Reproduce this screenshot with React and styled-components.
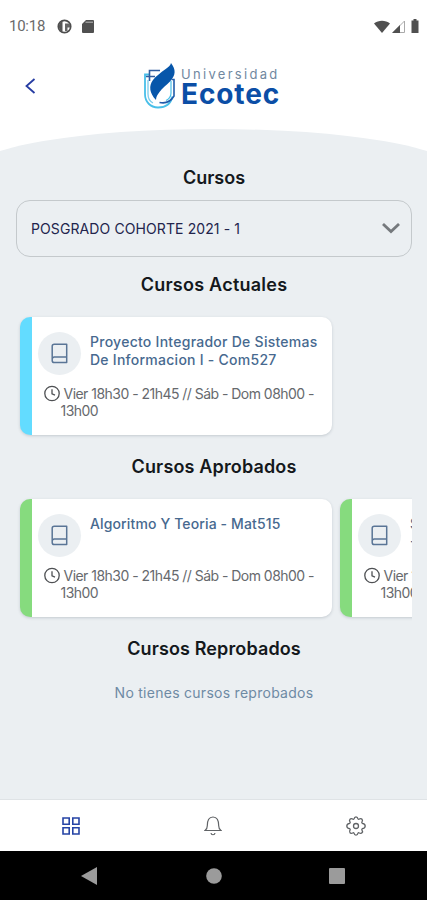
import React from 'react';
import styled, { createGlobalStyle } from 'styled-components';

const GlobalStyle = createGlobalStyle`
  * {
    box-sizing: border-box;
  }

  body {
    margin: 0;
    background: #fff;
    font-family: Inter, 'Open Sans', sans-serif;
  }

  svg {
    display: block;
    flex: none;
  }
`;

const Screen = styled.div`
  display: flex;
  flex-direction: column;
  height: 900px;
  overflow: hidden;
`;

const StatusBar = styled.div`
  display: flex;
  align-items: center;
  flex: none;
  height: 52px;
  padding: 0 4px 0 9px;
  font: 400 15px Roboto, sans-serif;
  letter-spacing: -0.25px;
  color: #6a6a6a;
`;

const StatusGroup = styled.div`
  display: flex;
  align-items: center;
  gap: ${({ $gap }) => $gap}px;
  margin-left: ${({ $left }) => $left};
`;

const Header = styled.header`
  display: grid;
  grid-template-columns: 62px 1fr 62px;
  flex: none;
  height: 77px;
`;

const BackButton = styled.button`
  display: flex;
  height: 67px;
  padding: 0 0 0 24px;
  align-items: center;
  border: 0;
  background: none;
`;

const Brand = styled.div`
  display: flex;
  height: 68px;
  gap: 4px;
  padding: 10px 0 0 81px;
`;

const BrandName = styled.div`
  display: flex;
  flex-direction: column;
  white-space: nowrap;
`;

const BrandTop = styled.span`
  margin-top: 5px;
  font: 400 13px/15px Inter, sans-serif;
  letter-spacing: 2.3px;
  color: #71889f;
`;

const BrandBottom = styled.span`
  font: 700 28px/25px Inter, sans-serif;
  letter-spacing: 0.9px;
  color: #0b4ea6;
`;

const Body = styled.main`
  flex: 1;
  min-height: 0;
  margin: 0 -27px;
  padding: 37px 42px 0 43px;
  border-radius: 240px 240px 0 0 / 41px 41px 0 0;
  background: #ebeff2;
`;

const SectionTitle = styled.h2`
  height: 24px;
  margin: 0;
  font-size: 18px;
  font-weight: 600;
  line-height: 24px;
  letter-spacing: ${({ $spacing }) => $spacing || 0}px;
  text-align: center;
  color: #14181c;
`;

const Select = styled.div`
  display: flex;
  align-items: center;
  justify-content: space-between;
  height: 57px;
  margin: 10px 0 16px;
  padding: 0 11px 0 14px;
  border: 1.5px solid #c4c9cc;
  border-radius: 14px;
  font-size: 14px;
  letter-spacing: 0.1px;
  color: #22244c;
`;

const CardRow = styled.div`
  display: flex;
  gap: 8px;
  height: 142px;
  margin-bottom: 16px;
  padding: 20px 0 4px 4px;
  overflow: hidden;
`;

const CardBox = styled.article`
  flex: none;
  width: 312px;
  height: 118px;
  padding: 15px 0 0 6px;
  border-left: 12px solid ${({ $accent }) => $accent};
  border-radius: 10px;
  background: #fff;
  box-shadow: 0 1px 3px rgba(60, 75, 90, 0.22);
`;

const CardTop = styled.div`
  display: flex;
  gap: 9px;
  height: 53px;
`;

const IconCircle = styled.div`
  display: flex;
  flex: none;
  align-items: center;
  justify-content: center;
  width: 43px;
  height: 43px;
  border-radius: 50%;
  background: #ebeff2;
`;

const CourseName = styled.h3`
  margin: 1px 0 0;
  font-size: 14px;
  font-weight: 500;
  line-height: 18px;
  letter-spacing: ${({ $spacing }) => $spacing || 0}px;
  white-space: pre;
  color: #47698f;
`;

const Schedule = styled.div`
  display: grid;
  grid-template-columns: 16px 1fr;
  column-gap: 3.5px;
  padding-left: 6px;
  font-size: 14px;
  line-height: 17px;
  letter-spacing: -0.53px;
  white-space: nowrap;
  color: #66696d;
`;

const ScheduleEnd = styled.span`
  grid-column: 2;
  margin-left: -3px;
`;

const EmptyText = styled.p`
  margin: 20px 0 0;
  font-size: 14px;
  line-height: 24px;
  letter-spacing: 0.27px;
  text-align: center;
  color: #6e8aa4;
`;

const TabBar = styled.nav`
  display: grid;
  grid-template-columns: repeat(3, 1fr);
  flex: none;
  align-items: center;
  justify-items: center;
  height: 52px;
  border-top: 1px solid #dfe3e6;
  background: #fff;
`;

const SystemBar = styled.div`
  display: flex;
  flex: none;
  align-items: center;
  justify-content: space-between;
  height: 49px;
  padding: 0 82px 0 81px;
  background: #000;
`;

const BrandMark = () => (
  <svg width="34" height="48" viewBox="0 0 34 48" fill="none">
    <path d="M7 12.500H2V32c0 8 5.500 13.500 13 13.500 8 0 13-4.500 14.500-11" stroke="#48bfe9" strokeWidth="1.800" />
    <path d="M17 8.500H6.500V19M3 14.500h9" stroke="#315d9f" strokeWidth="1.600" />
    <path d="M5 18v14c0 4 2 7.500 5 9" stroke="#7cccec" strokeWidth="1.300" />
    <path d="M28.500 17.500h2.500V34c-3 5-8 8-14.500 6.500" stroke="#215bab" strokeWidth="1.600" />
    <path d="M28 19v12c0 3-2 6-5 7.500" stroke="#48bfe9" strokeWidth="1.200" />
    <path d="M28 1c5 6.500 5 12-1 18.500-3 3-8 7-10.500 10.500-2 2.500-3.500 5-3.500 8C6.500 31 5.500 24 10 18c3-4 8-7.500 12-10.500C25.500 5 27.500 3.500 28 1Z" fill="#0756aa" />
  </svg>
);

const BookIcon = () => (
  <svg width="17" height="21" viewBox="0 0 17 21" fill="none" stroke="#5a7596" strokeWidth="1.500" strokeLinejoin="round">
    <path d="M3.300 1.200h12.400v18.400H3.300c-1.300 0-2.100-.8-2.100-2.100V3.300c0-1.300.8-2.100 2.100-2.100ZM1.200 16.300c0-1.300.8-2.200 2.100-2.200h12.400" />
  </svg>
);

const ClockIcon = () => (
  <svg width="16" height="17" viewBox="0 0 16 17" fill="none" stroke="#4e5053" strokeWidth="1.300">
    <circle cx="8" cy="8.500" r="7.200" />
    <path d="M8 4.300v4.500l3 1.300" />
  </svg>
);

const GearIcon = () => (
  <svg width="20" height="20" viewBox="0 0 20 20" fill="none" stroke="#606366" strokeWidth="1.300" strokeLinejoin="round">
    <path d="M8 3C8.300 1.400 8.800.8 10 .8s1.700.6 2 2.200l.8.300c1.400-.9 2.500-.9 3.200-.1s.7 1.800-.2 3.200l.4.900c1.700.2 3 .9 3 2.700s-1.300 2.500-3 2.700l-.4.900c.9 1.400.9 2.500.2 3.200s-1.800.7-3.200-.1L12 17c-.3 1.600-.8 2.200-2 2.200S8.300 18.600 8 17l-.8-.3c-1.400.8-2.500.9-3.200.1s-.7-1.800.2-3.200l-.4-.9C2.100 12.500.8 11.800.8 10s1.300-2.500 3-2.700l.4-.9c-.9-1.400-.9-2.500-.2-3.200s1.800-.8 3.200.1Z" />
    <circle cx="10" cy="10" r="2.500" />
  </svg>
);

function CourseCard({ accent, name, spacing }) {
  return (
    <CardBox $accent={accent}>
      <CardTop>
        <IconCircle>
          <BookIcon />
        </IconCircle>
        <CourseName $spacing={spacing}>{name}</CourseName>
      </CardTop>
      <Schedule>
        <ClockIcon />
        <span>Vier 18h30 - 21h45 // Sáb - Dom 08h00 -</span>
        <ScheduleEnd>13h00</ScheduleEnd>
      </Schedule>
    </CardBox>
  );
}

export default function App() {
  return (
    <Screen>
      <GlobalStyle />
      <StatusBar>
        <span>10:18</span>
        <StatusGroup $gap={10} $left="12px">
          <svg width="15" height="15" viewBox="0 0 15 15">
            <circle cx="7.500" cy="7.500" r="6.200" fill="#fff" stroke="#4d4d4d" strokeWidth="1.700" />
            <path d="M5.500 2v11A6 6 0 0 1 5.500 2Z" fill="#555" />
            <path d="M8 4.500h5v4h-2.500V12H8Z" fill="#666" />
          </svg>
          <svg width="12" height="14" viewBox="0 0 12 14">
            <path d="M4 1h7a1 1 0 0 1 1 1v11a1 1 0 0 1-1 1H1a1 1 0 0 1-1-1V5Z" fill="#505050" />
            <path d="M3.500 3.200h7.500" stroke="#bbb" />
          </svg>
        </StatusGroup>
        <StatusGroup $gap={2} $left="auto">
          <svg width="16" height="13" viewBox="0 0 16 13">
            <path d="M0 3.500C4.500-.2 11.500-.2 16 3.500L8 13Z" fill="#505050" />
          </svg>
          <svg width="13" height="13" viewBox="0 0 13 13">
            <path d="M12.500 1v11.500H1Z" fill="#fff" stroke="#aaa" />
            <path d="M8 5v8H0Z" fill="#505050" />
          </svg>
          <svg width="16" height="14" viewBox="0 0 16 14">
            <path d="M6.500 0h3v1.500h2V14h-7V1.500h2Z" fill="#505050" />
          </svg>
        </StatusGroup>
      </StatusBar>
      <Header>
        <BackButton>
          <svg width="12" height="16" viewBox="0 0 12 16" fill="none" stroke="#263ca2" strokeWidth="1.800">
            <path d="m10.500 1-8 7 8 7" />
          </svg>
        </BackButton>
        <Brand>
          <BrandMark />
          <BrandName>
            <BrandTop>Universidad</BrandTop>
            <BrandBottom>Ecotec</BrandBottom>
          </BrandName>
        </Brand>
      </Header>
      <Body>
        <SectionTitle>Cursos</SectionTitle>
        <Select>
          <span>POSGRADO COHORTE 2021 - 1</span>
          <svg width="18" height="12" viewBox="0 0 18 12" fill="none" stroke="#75797d" strokeWidth="2.800">
            <path d="m1 1 8 7.500L17 1" />
          </svg>
        </Select>
        <SectionTitle $spacing={0.25}>Cursos Actuales</SectionTitle>
        <CardRow>
          <CourseCard
            accent="#63dcff"
            spacing={0.26}
            name={'Proyecto Integrador De Sistemas\nDe Informacion I - Com527'}
          />
        </CardRow>
        <SectionTitle $spacing={0.15}>Cursos Aprobados</SectionTitle>
        <CardRow>
          <CourseCard accent="#86db7e" spacing={0.13} name="Algoritmo Y Teoria - Mat515" />
          <CourseCard accent="#86db7e" name={'Sistemas\n- Com'} />
        </CardRow>
        <SectionTitle $spacing={0.12}>Cursos Reprobados</SectionTitle>
        <EmptyText>No tienes cursos reprobados</EmptyText>
      </Body>
      <TabBar>
        <svg width="18" height="18" viewBox="0 0 18 18" fill="none" stroke="#2644a5" strokeWidth="1.600">
          <path d="M1 1h6.200v6.200H1ZM10.800 1H17v6.200h-6.200ZM1 10.800h6.200V17H1ZM10.800 10.800H17V17h-6.200Z" />
        </svg>
        <svg width="18" height="20" viewBox="0 0 18 20" fill="none" stroke="#606366" strokeWidth="1.200">
          <path d="M1 14.500h16c-1.700-1-2.300-2.200-2.300-4.700C14.700 4 13 1 9 1S3.300 4 3.300 9.800c0 2.500-.6 3.700-2.300 4.700Z" />
          <path d="M7 17c.3 2.300 3.700 2.300 4 0" />
        </svg>
        <GearIcon />
      </TabBar>
      <SystemBar>
        <svg width="17" height="18" viewBox="0 0 17 18">
          <path d="M0 9 16 0v18Z" fill="#9b9b9b" />
        </svg>
        <svg width="16" height="16" viewBox="0 0 16 16">
          <circle cx="8" cy="8" r="7.800" fill="#9b9b9b" />
        </svg>
        <svg width="16" height="16" viewBox="0 0 16 16">
          <rect width="16" height="16" rx="1" fill="#9b9b9b" />
        </svg>
      </SystemBar>
    </Screen>
  );
}
